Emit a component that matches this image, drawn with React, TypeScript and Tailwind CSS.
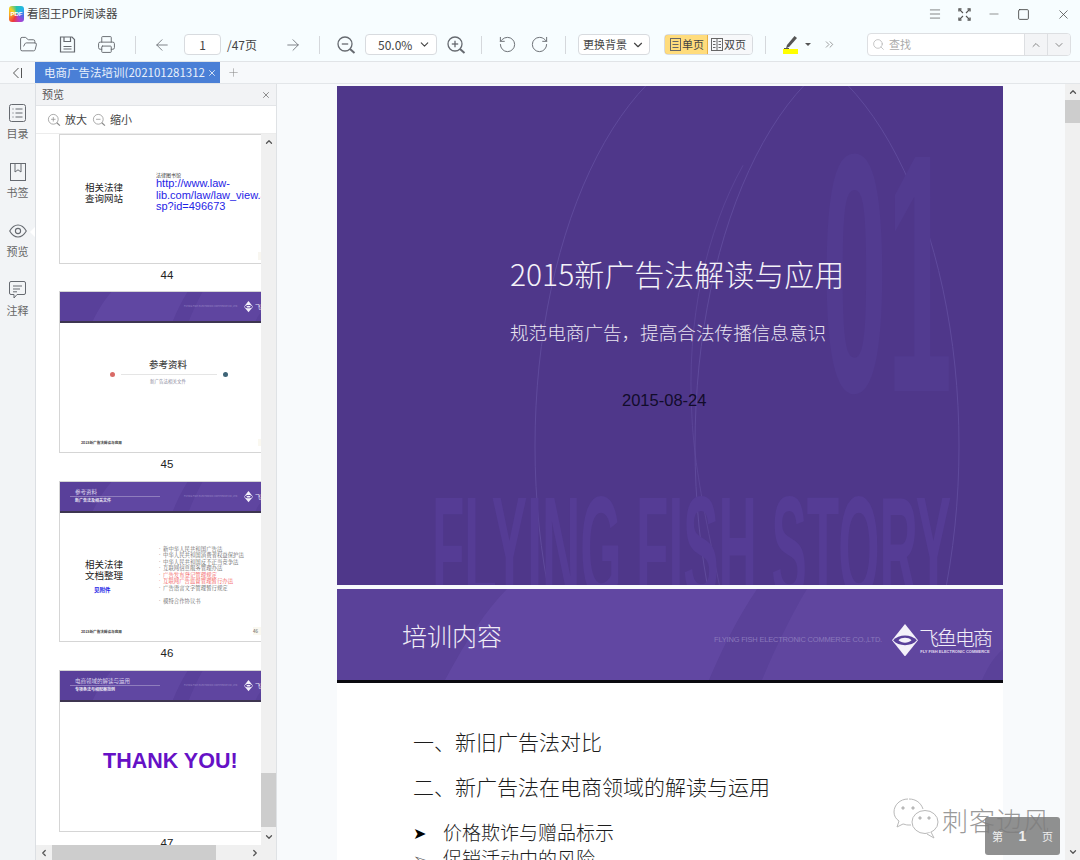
import React from "react";
import { ChevronDown, ChevronUp, ChevronLeft, ChevronRight, ChevronsRight, ArrowLeft, ArrowRight, FolderOpen, Printer, RotateCcw, RotateCw, Search, Plus, X, Menu, Minus, Square } from "lucide-react";

const C = "#666a70";

function Sep() {
  return <div className="w-px h-[18px] bg-[#d5d8dc]" />;
}

function ZoomGlass({ plus, size = 20, color = C, sw = 1.3 }: { plus?: boolean; size?: number; color?: string; sw?: number }) {
  return (
    <svg width={size} height={size} viewBox="0 0 20 20" fill="none" stroke={color} strokeWidth={sw}>
      <circle cx="9" cy="9" r="7" />
      <path d="M5.8 9h6.4" />
      {plus && <path d="M9 5.8v6.4" />}
      <path d="M14 14l4.5 4" strokeWidth={sw + 0.7} />
    </svg>
  );
}

function SaveIcon() {
  return (
    <svg width="17" height="17" viewBox="0 0 17 17" fill="none" stroke={C} strokeWidth="1.2">
      <path d="M1.5 1h11.5l2.5 2.5V16H1.5z" />
      <path d="M5 1v4.5h6.5V1M4.5 10.5h8M4.5 13h8" />
    </svg>
  );
}

function SlideBands({ w, h }: { w: number; h: number }) {
  return (
    <svg className="absolute inset-0" width={w} height={h} viewBox="0 0 666 91" preserveAspectRatio="none">
      <path d="M108 91C130 50 150 20 170 0H420C400 30 385 60 372 91Z" fill="#6c52ad" opacity="0.42" />
      <path d="M425 91C440 55 455 25 470 0H666V60C655 70 650 80 645 91Z" fill="#6c52ad" opacity="0.32" />
    </svg>
  );
}

function ThumbHeader({ title, sub }: { title?: string; sub?: string }) {
  return (
    <div className="relative h-[31px] bg-[#59409a] border-b-2 border-[#3d3550] shrink-0 overflow-hidden">
      <SlideBands w={202} h={29} />
      <div className="relative flex h-full items-center">
        <div className="w-[90px] ml-[10px] flex flex-col">
          {title && <div className="text-[5.5px] leading-[7px] pl-[5px] text-[#ddd6ee]">{title}</div>}
          {title && <div className="h-px bg-[#8f7dbd]" />}
          {sub && <div className="text-[4px] leading-[7px] pl-[5px] text-[#e8e4f2] font-bold">{sub}</div>}
        </div>
        <div className="ml-auto flex items-center gap-[2px] mr-[-8px] mt-[1px]">
          <div className="text-[2.5px] text-[#9a88c6] mr-[4px] whitespace-nowrap">FLYING FISH ELECTRONIC COMMERCE CO.,LTD.</div>
          <LogoMark size={9} />
          <div className="text-[6px] leading-none text-[#e8e4f2] whitespace-nowrap w-[14px] overflow-hidden">飞鱼</div>
        </div>
      </div>
    </div>
  );
}

function LogoMark({ size }: { size: number }) {
  return (
    <svg width={size} height={size * 1.25} viewBox="0 0 24 30">
      <path d="M12 0L24 15L12 30L0 15Z" fill="#f4f1fa" />
      <path d="M1 15C6 9 18 9 23 15C18 21 6 21 1 15Z" fill="#59409a" />
      <path d="M6 15C9 12 15 12 18 15C15 18 9 18 6 15Z" fill="#f4f1fa" />
    </svg>
  );
}

function Thumb({ h, children, n, gap = 28 }: { h: number; children: React.ReactNode; n: number; gap?: number }) {
  return (
    <div className="flex flex-col shrink-0">
      <div className="w-[202px] flex flex-col overflow-hidden bg-white border-l border-b border-t border-[#d5d5d5]" style={{ height: h }}>
        {children}
      </div>
      <div className="w-[216px] text-center text-[11.5px] leading-[16px] pt-[3px] text-[#222] font-['Liberation_Sans','Noto_Sans_CJK_SC',sans-serif]" style={{ height: gap }}>
        {n}
      </div>
    </div>
  );
}

function Footer({ num }: { num?: string }) {
  return (
    <div className="mt-auto mb-[6px] flex items-end pl-[21px]">
      <div className="text-[3.6px] font-bold leading-[6px] text-[#444]">2015新广告法解读与应用</div>
      {num ? (
        <div className="ml-auto w-[8px] h-[8px] bg-[#faf8f0] text-[4.5px] leading-[8px] text-[#555]">{num}</div>
      ) : (
        <div className="ml-auto w-[3px] h-[7px] bg-[#faf8f0]" />
      )}
    </div>
  );
}

const law = [
  ["新中华人民共和国广告法", 0],
  ["中华人民共和国消费者权益保护法", 0],
  ["中华人民共和国反不正当竞争法", 0],
  ["互联网信息服务管理办法", 0],
  ["广告发布登记管理规定", 1],
  ["互联网广告监督管理暂行办法", 1],
  ["广告语言文字管理暂行规定", 0],
] as const;

function Thumbnails() {
  return (
    <div className="flex-1 flex flex-col pl-[23px] bg-white overflow-hidden rounded-br-[3px]">
      <Thumb h={130} n={44} gap={27}>
        <div className="flex flex-1">
          <div className="w-[96px] pt-[47px] pl-[25px] text-[9.5px] leading-[10.5px] text-[#222] shrink-0">
            相关法律
            <br />
            查询网站
          </div>
          <div className="pt-[37px] w-[106px] overflow-hidden shrink-0">
            <div className="text-[5px] leading-[6px] text-[#333]">法律图书馆</div>
            <div className="text-[11px] leading-[11.5px] text-[#1f24e6] font-['Liberation_Sans',sans-serif] whitespace-nowrap">
              http://www.law-
              <br />
              lib.com/law/law_view.a
              <br />
              sp?id=496673
            </div>
            <div className="ml-auto mt-[39px] w-[4px] h-[8px] bg-[#f8f6f0]" />
          </div>
        </div>
      </Thumb>
      <Thumb h={162} n={45}>
        <ThumbHeader />
        <div className="flex flex-col flex-1">
          <div className="text-center w-[216px] text-[9.5px] leading-[12px] font-medium text-[#444] pt-[35px]">参考资料</div>
          <div className="flex items-center w-[216px] pl-[50px] mt-[2px]">
            <div className="w-[5px] h-[5px] rounded-full bg-[#d96a66]" />
            <div className="w-[96px] h-px bg-[#e5e5e5] ml-[6px] mr-[6px]" />
            <div className="w-[5px] h-[5px] rounded-full bg-[#3e6477]" />
          </div>
          <div className="text-center w-[216px] text-[4.5px] leading-[8px] text-[#889]">新广告法相关文件</div>
          <Footer />
        </div>
      </Thumb>
      <Thumb h={161} n={46}>
        <ThumbHeader title="参考资料" sub="新广告法及相关文件" />
        <div className="flex flex-1 flex-col">
          <div className="flex">
            <div className="w-[97px] pl-[25px] pt-[46px] shrink-0">
              <div className="text-[9.5px] leading-[10.5px] text-[#222]">
                相关法律
                <br />
                文档整理
              </div>
              <div className="pl-[9px] mt-[6px] text-[5.5px] leading-[8px] font-bold text-[#1f24e6]">见附件</div>
            </div>
            <div className="pt-[33px] font-['Noto_Serif_CJK_SC','Noto_Sans_CJK_SC',serif]">
              {law.map(([t, red]) => (
                <div key={t} className={"text-[5.4px] leading-[6.45px] whitespace-nowrap " + (red ? "text-[#f25555]" : "text-[#666]")}>
                  <span className={"inline-block w-[6px] " + (red ? "text-[#e33]" : "text-[#333]")}>•</span>
                  {t}
                </div>
              ))}
              <div className="text-[5.4px] leading-[6.45px] mt-[6.5px] text-[#666] whitespace-nowrap">
                <span className="inline-block w-[6px] text-[#333]">•</span>模特合作协议书
              </div>
            </div>
          </div>
          <Footer num="46" />
        </div>
      </Thumb>
      <Thumb h={162} n={47} gap={20}>
        <ThumbHeader title="电商领域的解读与运用" sub="专项条法与相配案范例" />
        <div className="flex-1 pt-[46px] pl-[43px]">
          <div className="text-[21.5px] leading-[26px] font-bold text-[#6611c6] font-['Liberation_Sans',sans-serif] whitespace-nowrap">THANK YOU!</div>
        </div>
      </Thumb>
    </div>
  );
}

function ScrollV({ thumbTop, thumbH }: { thumbTop: number; thumbH: number }) {
  return (
    <div className="w-[15px] bg-[#f0f0f0] flex flex-col items-center shrink-0">
      <div className="h-[16px] flex items-center justify-center">
        <ChevronUp size={10} strokeWidth={3} color="#555" />
      </div>
      <div className="w-full flex-1" style={{ paddingTop: thumbTop }}>
        <div className="w-full bg-[#cdcdcd]" style={{ height: thumbH }} />
      </div>
      <div className="h-[16px] flex items-center justify-center">
        <ChevronDown size={10} strokeWidth={3} color="#555" />
      </div>
    </div>
  );
}

function SideItem({ label, icon, active }: { label: string; icon: React.ReactNode; active?: boolean }) {
  return (
    <div className="relative h-[59px] flex flex-col items-center">
      <div className="h-[22px] flex items-center justify-center">{icon}</div>
      <div className="text-[11px] leading-[16px] mt-[1px] text-[#666] whitespace-nowrap">{label}</div>
      {active && <div className="absolute right-0 top-[7px] w-0 h-0 border-y-[5px] border-y-transparent border-r-[5px] border-r-white" />}
    </div>
  );
}

function Sidebar() {
  return (
    <div className="w-[36px] bg-[#f2f4f6] border-r border-[#dcdfe3] shrink-0 pt-[18px] flex flex-col">
      <SideItem
        label="目录"
        icon={
          <svg width="17" height="18" viewBox="0 0 17 18" fill="none" stroke={C} strokeWidth="1">
            <rect x="0.5" y="0.5" width="16" height="17" rx="2" />
            <path d="M3.5 5h1M6.5 5h7M3.5 9h1M6.5 9h7M3.5 13h1M6.5 13h7" />
          </svg>
        }
      />
      <SideItem
        label="书签"
        icon={
          <svg width="16" height="18" viewBox="0 0 16 18" fill="none" stroke={C} strokeWidth="1">
            <rect x="0.5" y="0.5" width="15" height="17" />
            <path d="M5 1v8l3-2.2L11 9V1" />
          </svg>
        }
      />
      <SideItem
        label="预览"
        active
        icon={
          <svg width="18" height="14" viewBox="0 0 18 14" fill="none" stroke={C} strokeWidth="1.1">
            <path d="M0.7 7C3 3 6 1 9 1s6 2 8.3 6C15 11 12 13 9 13S3 11 0.7 7Z" />
            <circle cx="9" cy="7" r="2.6" />
          </svg>
        }
      />
      <SideItem
        label="注释"
        icon={
          <svg width="17" height="18" viewBox="0 0 17 18" fill="none" stroke={C} strokeWidth="1">
            <path d="M2 .5h13a1.5 1.5 0 0 1 1.5 1.5v10a1.5 1.5 0 0 1-1.500 1.500H8L5 17v-3.500H2A1.500 1.500 0 0 1 .5 12V2A1.500 1.500 0 0 1 2 .5Z" />
            <path d="M4 5h9M4 8h7M4 10.800h4" />
          </svg>
        }
      />
    </div>
  );
}

function PreviewPanel() {
  return (
    <div className="w-[241px] shrink-0 flex flex-col border-r border-[#dfe2e5] bg-white">
      <div className="h-[22px] bg-[#f2f3f5] border-b border-[#e3e5e8] flex items-center pl-[6px] pr-[5px] shrink-0">
        <span className="text-[11px] text-[#555]">预览</span>
        <X size={10} className="ml-auto" color="#777" />
      </div>
      <div className="h-[28px] border-b border-[#ececec] flex items-center pl-[11px] shrink-0">
        <ZoomGlass plus size={14} color="#888" sw={1} />
        <span className="text-[11px] text-[#444] ml-[4px]">放大</span>
        <span className="ml-[5px] flex">
          <ZoomGlass size={14} color="#888" sw={1} />
        </span>
        <span className="text-[11px] text-[#444] ml-[4px]">缩小</span>
      </div>
      <div className="flex-1 flex min-h-0">
        <Thumbnails />
        <ScrollV thumbTop={623} thumbH={54} />
      </div>
      <div className="h-[15px] bg-[#f0f0f0] flex items-center shrink-0">
        <div className="w-[16px] flex justify-center">
          <ChevronLeft size={10} strokeWidth={3} color="#555" />
        </div>
        <div className="w-[164px] h-full bg-[#cdcdcd]" />
        <div className="flex-1 pr-[16px] flex justify-end">
          <ChevronRight size={10} strokeWidth={3} color="#555" />
        </div>
      </div>
    </div>
  );
}

function CoverSlide() {
  return (
    <div className="relative w-[666px] h-[499px] bg-[#4f378a] overflow-hidden shrink-0">
      <svg className="absolute inset-0" width="666" height="499" fill="none" stroke="#5f4a9c" strokeWidth="1">
        <ellipse cx="410" cy="360" rx="212" ry="410" />
        <ellipse cx="566" cy="360" rx="208" ry="410" />
        <path d="M407 82C370 150 350 240 356 340C360 420 385 500 405 630" transform="translate(-1,-1) scale(1,0.98)" opacity="0.7" />
        <text x="485" y="305" fontSize="340" fontWeight="700" textLength="130" lengthAdjust="spacingAndGlyphs" fill="#523b90" stroke="none" fontFamily="'Liberation Sans Narrow','Liberation Sans',sans-serif">01</text>
        <text x="95" y="513" fontSize="146" fontWeight="700" textLength="519" lengthAdjust="spacingAndGlyphs" fill="#553c95" stroke="none" fontFamily="'Liberation Sans Narrow','Liberation Sans',sans-serif">FLYING FISH STORY</text>
        <text x="423" y="560" fontSize="54" fontWeight="700" textLength="191" lengthAdjust="spacingAndGlyphs" fill="#543c93" stroke="none" fontFamily="'Liberation Sans Narrow','Liberation Sans',sans-serif">COMPANY PROFILE</text>
      </svg>
      <div className="relative pl-[173px] pt-[165px] flex flex-col">
        <div className="text-[30px] leading-[44px] text-[#f4f2f8] font-light whitespace-nowrap">2015新广告法解读与应用</div>
        <div className="text-[18.6px] leading-[28px] mt-[23px] text-[#e8e4f0] font-light whitespace-nowrap">规范电商广告，提高合法传播信息意识</div>
        <div className="text-[16.500px] leading-[20px] mt-[44px] ml-[112px] text-[#120c2a] font-['Liberation_Sans',sans-serif] whitespace-nowrap">2015-08-24</div>
      </div>
    </div>
  );
}

function ContentSlide() {
  return (
    <div className="w-[666px] bg-white mt-[4px] shrink-0 flex flex-col">
      <div className="relative h-[94px] bg-[#5a4199] border-b-[3px] border-[#0b0a10] overflow-hidden">
        <SlideBands w={666} h={91} />
        <div className="relative flex items-center h-full">
          <div className="ml-[65px] text-[25px] leading-[36px] text-[#efecf6] font-light whitespace-nowrap">培训内容</div>
          <div className="ml-auto flex items-center mr-[12px] mt-[11px]">
            <div className="text-[7.500px] text-[#8a78bb] mr-[10px] whitespace-nowrap font-['Liberation_Sans',sans-serif] tracking-[-0.2px]">FLYING FISH ELECTRONIC COMMERCE CO.,LTD.</div>
            <LogoMark size={26} />
            <div className="ml-[1px] flex flex-col items-center">
              <div className="text-[20px] leading-[23px] text-[#f0edf7] font-light whitespace-nowrap tracking-[-2px]">飞鱼电商</div>
              <div className="text-[4px] leading-[5px] font-bold text-[#e0dbef] font-['Liberation_Sans',sans-serif] whitespace-nowrap">FLY FISH ELECTRONIC COMMERCE</div>
            </div>
          </div>
        </div>
      </div>
      <div className="pl-[76px] pt-[43px] text-[#1c1c1c] font-light">
        <div className="text-[21px] leading-[30px] whitespace-nowrap">一、新旧广告法对比</div>
        <div className="text-[21px] leading-[30px] mt-[15px] whitespace-nowrap">二、新广告法在电商领域的解读与运用</div>
        <div className="flex items-center mt-[16px] h-[30px]">
          <span className="w-[30px] text-[16px] leading-[30px] text-black">➤</span>
          <span className="text-[19px] whitespace-nowrap">价格欺诈与赠品标示</span>
        </div>
        <div className="flex items-center h-[22px] ">
          <span className="w-[30px] text-[16px] leading-[22px] text-[#555]">➢</span>
          <span className="text-[19px] whitespace-nowrap">促销活动中的风险</span>
        </div>
      </div>
    </div>
  );
}

function Watermark() {
  return (
    <div className="absolute right-[30px] bottom-[18px] flex items-center">
      <svg width="48" height="44" viewBox="0 0 48 44" fill="#fff" stroke="#b9b9b9" strokeWidth="1">
        <path d="M16 1C8 1 2 7 2 14c0 4 2 7 5 9l-2 6 6-3c1 0 3 1 5 1 1 0 2 0 3 0" />
        <path d="M17 1c7 0 12 4 14 10" />
        <ellipse cx="33" cy="24" rx="13" ry="11.500" />
        <path d="M39 34l3 6-7-4" />
        <circle cx="11" cy="10" r="1.200" fill="#bbb" />
        <circle cx="21" cy="10" r="1.200" fill="#bbb" />
        <circle cx="28" cy="20" r="1.200" fill="#bbb" />
        <circle cx="37" cy="20" r="1.200" fill="#bbb" />
      </svg>
      <span className="text-[26px] leading-[34px] ml-[2px] tracking-[1px] text-[#9a9a9a] font-light [text-shadow:1px_1px_0_#fff] whitespace-nowrap">刺客边风</span>
    </div>
  );
}

export default function App() {
  return (
    <div className="relative w-[1080px] h-[860px] overflow-hidden flex flex-col bg-[#f8fafc] font-['Noto_Sans_CJK_SC',sans-serif]">
      {/* title bar */}
      <div className="h-[28px] bg-[#f7fdff] flex items-center pl-[9px] shrink-0">
        <div className="w-[15px] h-[16px] rounded-[3px] bg-[conic-gradient(from_0deg,#27c4a8,#22b5ea,#4a6ae8,#b03fd0,#ef3b3b,#f5a020,#f7d020,#27c4a8)] flex items-center justify-center">
          <span className="text-[6px] font-bold leading-none text-white font-['Liberation_Sans',sans-serif]">PDF</span>
        </div>
        <span className="text-[11.500px] ml-[3px] text-[#444]">看图王PDF阅读器</span>
        <div className="ml-auto flex items-center">
          <Menu size={14} color="#555" strokeWidth={1.2} />
          <svg className="ml-[16px]" width="13" height="13" viewBox="0 0 13 13" fill="none" stroke="#555" strokeWidth="1.100">
            <path d="M2 2l3 3M11 2L8 5M2 11l3-3M11 11L8 8" />
            <path d="M1 3.500V1h2.500M9.500 1H12v2.500M1 9.500V12h2.500M9.500 12H12V9.500" strokeWidth="1.400" />
          </svg>
          <Minus className="ml-[16px]" size={14} color="#666" strokeWidth={1.2} />
          <Square className="ml-[16px] mr-[26px]" size={13} color="#444" strokeWidth={1.6} />
          <X className="mr-[9px]" size={15} color="#444" strokeWidth={1.2} />
        </div>
      </div>
      {/* toolbar */}
      <div className="h-[34px] bg-[#f7fdff] border-b border-[#e1e4e7] flex items-center shrink-0 text-[#444]">
        <FolderOpen className="ml-[19px]" size={19} color={C} strokeWidth={1.2} />
        <div className="ml-[21px] flex">
          <SaveIcon />
        </div>
        <Printer className="ml-[21px]" size={19} color={C} strokeWidth={1.2} />
        <div className="ml-[19px] flex">
          <Sep />
        </div>
        <ArrowLeft className="ml-[17px]" size={18} color={C} strokeWidth={1.1} />
        <div className="ml-[13px] w-[37px] h-[21px] bg-white border border-[#d8dbdf] rounded-[4px] text-center text-[12px] leading-[19px]">1</div>
        <span className="ml-[6px] text-[12px] w-[30px] whitespace-nowrap">/47页</span>
        <ArrowRight className="ml-[27px]" size={18} color={C} strokeWidth={1.1} />
        <div className="ml-[17px] flex">
          <Sep />
        </div>
        <div className="ml-[16px] flex">
          <ZoomGlass />
        </div>
        <div className="ml-[9px] w-[72px] h-[21px] bg-white border border-[#d8dbdf] rounded-[4px] flex items-center text-[12px] pl-[12px]">
          50.0%
          <ChevronDown className="ml-auto mr-[5px]" size={13} color="#444" />
        </div>
        <div className="ml-[9px] flex">
          <ZoomGlass plus />
        </div>
        <div className="ml-[15px] flex">
          <Sep />
        </div>
        <RotateCcw className="ml-[16px]" size={19} color={C} strokeWidth={1.2} />
        <RotateCw className="ml-[13px]" size={19} color={C} strokeWidth={1.2} />
        <div className="ml-[16px] flex">
          <Sep />
        </div>
        <div className="ml-[12px] w-[72px] h-[21px] bg-white border border-[#d8dbdf] rounded-[4px] flex items-center text-[11px] pl-[4px] whitespace-nowrap">
          更换背景
          <ChevronDown className="ml-auto mr-[4px]" size={14} color="#444" />
        </div>
        <div className="ml-[14px] w-[89px] h-[21px] flex rounded-[4px] text-[11px] leading-[19px] overflow-hidden border border-[#d8dbdf]">
          <div className="w-[44px] flex items-center bg-[#ffdc7c] border border-[#e8b043] rounded-l-[4px] m-[-1px] mr-0 pl-[5px] shrink-0">
            <svg width="11" height="13" viewBox="0 0 11 13" fill="none" stroke="#666" strokeWidth="1">
              <rect x="0.500" y="0.500" width="10" height="12" />
              <path d="M2.500 3.500h6M2.500 6.500h6M2.500 9.500h6" />
            </svg>
            <span className="ml-px">单页</span>
          </div>
          <div className="flex items-center bg-[#f7f8fa] flex-1 pl-[3px]">
            <svg width="12" height="13" viewBox="0 0 12 13" fill="none" stroke="#666" strokeWidth="1">
              <rect x="0.500" y="0.500" width="11" height="12" />
              <path d="M6 .5v12M2 3.500h2.500M2 6.500h2.500M2 9.500h2.500M7.500 3.500H10M7.500 6.500H10M7.500 9.500H10" />
            </svg>
            <span className="ml-px">双页</span>
          </div>
        </div>
        <div className="ml-[12px] flex">
          <Sep />
        </div>
        <div className="ml-[17px] w-[15px] flex flex-col items-center">
          <svg width="14" height="13" viewBox="0 0 14 13">
            <path d="M10.500 0L13 2 5.500 10.500 2 12.500 3 9Z" fill="#555" />
            <path d="M0 12.500h5" stroke="#555" />
          </svg>
          <div className="w-[15px] h-[5px] bg-[#ffff00]" />
        </div>
        <div className="ml-[7px] w-0 h-0 border-x-[3px] border-x-transparent border-t-[3.500px] border-t-[#555]" />
        <ChevronsRight className="ml-[12px]" size={13} color="#777" strokeWidth={1.3} />
        <div className="ml-[31px] w-[204px] h-[23px] flex border border-[#dddfe2] rounded-[4px] overflow-hidden bg-white">
          <div className="flex items-center flex-1 pl-[4px]">
            <Search size={13} color="#aaa" strokeWidth={1.2} />
            <span className="ml-[4px] text-[11px] text-[#aaa]">查找</span>
          </div>
          <div className="w-[23px] bg-[#f3f4f6] border-l border-[#dddfe2] flex items-center justify-center">
            <ChevronUp size={12} color="#888" />
          </div>
          <div className="w-[23px] bg-[#f3f4f6] border-l border-[#dddfe2] flex items-center justify-center">
            <ChevronDown size={12} color="#888" />
          </div>
        </div>
      </div>
      {/* tabs */}
      <div className="h-[22px] bg-[#f7f9fb] border-b border-[#e3e6e9] flex items-stretch shrink-0">
        <div className="w-[35px] flex items-center justify-center">
          <svg width="11" height="12" viewBox="0 0 11 12" fill="none" stroke="#555" strokeWidth="1">
            <path d="M6.500 1L1.500 6l5 5M9.500 1v10" />
          </svg>
        </div>
        <div className="w-[185px] bg-[#4a7fd6] flex items-center pl-[9px] pr-[3px] overflow-hidden">
          <span className="text-[11.500px] leading-none text-[#e8f0fb] whitespace-nowrap overflow-hidden flex-1">电商广告法培训(20210128131234</span>
          <X size={10} color="#eef3fb" className="ml-[2px] shrink-0" />
        </div>
        <div className="ml-[7px] flex items-center">
          <Plus size={13} color="#888" strokeWidth={1} />
        </div>
      </div>
      {/* body */}
      <div className="flex-1 flex min-h-0">
        <Sidebar />
        <PreviewPanel />
        <div className="flex-1 pl-[60px] pt-[2px] flex flex-col min-w-0 overflow-hidden">
          <CoverSlide />
          <ContentSlide />
        </div>
        <ScrollV thumbTop={0} thumbH={23} />
      </div>
      <Watermark />
      <div className="absolute right-[20px] bottom-[5px] w-[75px] h-[38px] rounded-[3px] bg-[#7d7d7d]/85 flex items-center justify-between px-[7px] text-[#eee]">
        <span className="text-[11px]">第</span>
        <span className="text-[14px] font-bold font-['Liberation_Sans',sans-serif]">1</span>
        <span className="text-[11px]">页</span>
      </div>
    </div>
  );
}
